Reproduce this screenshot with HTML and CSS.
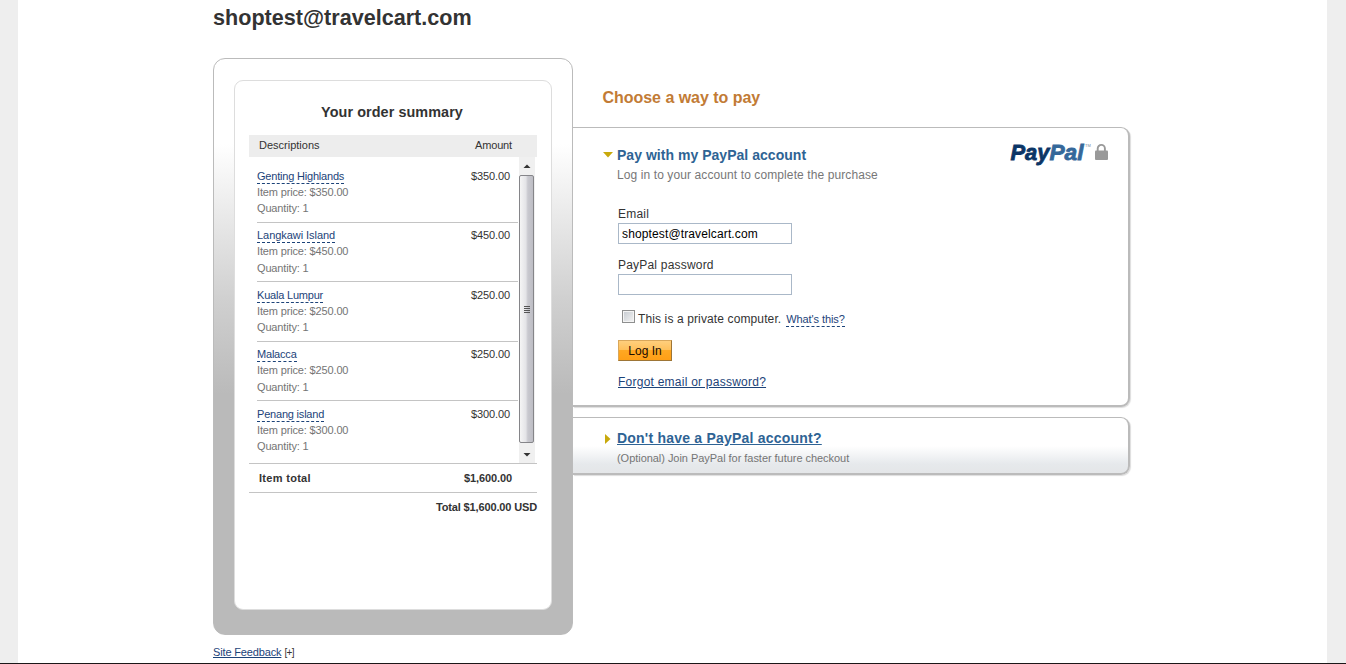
FILE: index.html
```html
<!DOCTYPE html>
<html lang="en">
<head>
<meta charset="utf-8">
<title>Choose a way to pay</title>
<link rel="stylesheet" href="styles.css">
</head>
<body>
<div class="page">
  <h1 class="merchant">shoptest@travelcart.com</h1>
  <div class="columns">
    <section class="summary">
      <div class="summary-card">
        <h2 class="summary-title">Your order summary</h2>
        <div class="summary-head"><span>Descriptions</span><span class="head-amount">Amount</span></div>
        <div class="list">
          <ul class="items">
            <li class="item"><div><a class="tip">Genting Highlands</a><p>Item price: $350.00</p><p>Quantity: 1</p></div><span class="amount">$350.00</span></li>
            <li class="item"><div><a class="tip wide">Langkawi Island</a><p>Item price: $450.00</p><p>Quantity: 1</p></div><span class="amount">$450.00</span></li>
            <li class="item"><div><a class="tip">Kuala Lumpur</a><p>Item price: $250.00</p><p>Quantity: 1</p></div><span class="amount">$250.00</span></li>
            <li class="item"><div><a class="tip">Malacca</a><p>Item price: $250.00</p><p>Quantity: 1</p></div><span class="amount">$250.00</span></li>
            <li class="item"><div><a class="tip">Penang island</a><p>Item price: $300.00</p><p>Quantity: 1</p></div><span class="amount">$300.00</span></li>
          </ul>
          <div class="scrollbar">
            <svg class="arrow" width="15" height="18" viewBox="0 0 15 18"><path d="M4.500 11h7L8 7.500z" fill="#333"/></svg>
            <div class="thumb"><i></i><i></i><i></i><i></i></div>
            <svg class="arrow" width="15" height="20" viewBox="0 0 15 20"><path d="M4.500 10h7L8 13.500z" fill="#333"/></svg>
          </div>
        </div>
        <div class="item-total"><span class="label">Item total</span><span class="sum">$1,600.00</span></div>
        <div class="total">Total $1,600.00 USD</div>
      </div>
    </section>
    <section class="pay">
      <h2 class="pay-title">Choose a way to pay</h2>
      <div class="panel login">
        <svg class="marker" width="10" height="6" viewBox="0 0 10 6"><path d="M0 0h10L5 5.500z" fill="#c8a90c"/></svg>
        <div class="login-body">
          <h3 class="panel-title">Pay with my PayPal account</h3>
          <p class="hint">Log in to your account to complete the purchase</p>
          <label class="field-label" for="email">Email</label>
          <input class="field" id="email" type="text" value="shoptest@travelcart.com">
          <label class="field-label second" for="password">PayPal password</label>
          <input class="field" id="password" type="password">
          <div class="private"><span class="check"></span><span class="private-text">This is a private computer.</span><a class="tip whats">What's this?</a></div>
          <button class="submit" type="button">Log In</button>
          <a class="forgot">Forgot email or password?</a>
        </div>
        <div class="brand">
          <svg width="100" height="32" viewBox="0 -2 100 32">
            <g class="wordmark"><text x="0.500" y="18" textLength="39" lengthAdjust="spacingAndGlyphs" fill="#0b3566" stroke="#0b3566">Pay</text><text x="39.500" y="18" textLength="34" lengthAdjust="spacingAndGlyphs" fill="#35689a" stroke="#35689a">Pal</text></g>
            <text class="tm" x="75" y="5">TM</text>
            <path d="M87.700 10V6.500a3.600 3.600 0 0 1 7.200 0V10" fill="none" stroke="#999" stroke-width="1.900"/>
            <rect x="85" y="8.500" width="13" height="9.500" rx="1" fill="#999"/>
          </svg>
        </div>
      </div>
      <div class="panel signup">
        <svg class="marker side" width="6" height="10" viewBox="0 0 6 10"><path d="M0 0v10l5.500-5z" fill="#c8a90c"/></svg>
        <div>
          <h3 class="panel-title"><a class="join">Don't have a PayPal account?</a></h3>
          <p class="optional">(Optional) Join PayPal for faster future checkout</p>
        </div>
      </div>
    </section>
  </div>
  <footer class="feedback"><a>Site Feedback</a><span>[+]</span></footer>
</div>
</body>
</html>
```
FILE: styles.css
```css
* { box-sizing: border-box; }
html, body { height: 100%; overflow: hidden; }
body { margin: 0; padding: 0 19px 0 18px; background: #eee; color: #333; font-family: "Liberation Sans", Arial, sans-serif; font-size: 11px; border-bottom: 1px solid #1b1718; white-space: nowrap; }
h1, h2, h3, p, ul { margin: 0; padding: 0; }
ul { list-style: none; }
.page { height: 663px; background: #fff; padding-left: 195px; }
.merchant { font-size: 21.6px; line-height: 26px; height: 58px; padding-top: 5px; }
.columns { display: flex; align-items: flex-start; }
.summary { width: 360px; height: 577px; padding: 21px 20px 24px; border: 1px solid #bbb; border-radius: 12px; background: linear-gradient(#fff 85px, #d0d0d0 240px, #bababa 335px); }
.summary-card { height: 530px; padding: 0 14px; border: 1px solid #ddd; border-radius: 9px; background: #fff; }
.summary-title { font-size: 14.4px; letter-spacing: .08px; line-height: 20px; padding: 21px 0 13px; text-align: center; width: 286px; }
.summary-head { display: flex; justify-content: space-between; align-items: center; width: 288px; height: 22px; padding: 0 25px 2px 10px; background: #ededed; }
.head-amount { letter-spacing: -.15px; }
.list { display: flex; width: 288px; height: 306px; padding-left: 8px; }
.items { width: 261px; padding-top: 6.200px; }
.item { display: flex; justify-content: space-between; height: 59.500px; padding: 4.700px 8px 0 0; line-height: 16.100px; border-bottom: 1px solid #c4c4c4; color: #757575; }
.item:last-child { border-bottom: 0; }
.item p { letter-spacing: -.15px; }
.tip { color: #1c4379; border-bottom: 1px dashed #1c4379; padding-bottom: 1px; letter-spacing: -.2px; }
.wide { letter-spacing: -.05px; }
.amount { color: #333; letter-spacing: -.1px; }
.scrollbar { width: 16px; margin-left: 1px; background: #f0f0f0; }
.arrow { display: block; }
.thumb { display: flex; flex-direction: column; align-items: center; justify-content: center; gap: 1px; width: 15px; height: 268px; border: 1px solid #858589; border-radius: 2px; background: linear-gradient(90deg, #f5f5f5, #e4e4e7 45%, #c9c9cf 60%, #bdbdc4); }
.thumb i { width: 6px; height: 1px; background: #555; }
.item-total { display: flex; justify-content: space-between; align-items: center; width: 288px; height: 30px; padding: 0 25px 0 10px; border: solid #c4c4c4; border-width: 1px 0; font-weight: bold; }
.item-total .label { letter-spacing: .3px; }
.sum { letter-spacing: -.1px; }
.total { width: 288px; padding-top: 8px; line-height: 13px; text-align: right; font-weight: bold; letter-spacing: -.14px; }
.pay { width: 557px; }
.pay-title { height: 69px; padding: 30px 0 0 29.500px; font-size: 16px; line-height: 20px; letter-spacing: -.03px; color: #c27b35; }
.panel { display: flex; border: 1px solid #bbb; border-width: 1px 2px 2px 0; border-radius: 0 9px 9px 0; background: #fff; box-shadow: 1px 1px 1px #ddd; }
.login { height: 280px; padding-left: 30px; }
.marker { flex: none; margin: 24px 4px 0 0; }
.login-body { display: flex; flex-direction: column; align-items: flex-start; width: 393px; padding-top: 18px; font-size: 12px; }
.panel-title { font-size: 14px; letter-spacing: .03px; line-height: 18px; color: #2e6394; }
.hint { line-height: 16px; margin-top: 3px; color: #777; letter-spacing: .1px; }
.field-label { margin: 24px 0 2px 1px; line-height: 14px; letter-spacing: .2px; }
.field-label.second { margin-top: 14px; }
.field { width: 174px; height: 21px; margin-left: 1px; padding: 0 3px; border: 1px solid #aab8c8; background: #fff; color: #000; font: 12px "Liberation Sans", Arial, sans-serif; letter-spacing: .13px; }
.private { display: flex; align-items: center; height: 16px; margin: 16px 0 0 5px; }
.private-text { letter-spacing: .12px; }
.check { width: 13px; height: 13px; margin: -5px 3px 0 0; border: 1px solid #8e8f8f; background: linear-gradient(135deg, #c5cad0, #f4f4f4); box-shadow: inset 0 0 0 1px #f4f4f4; }
.whats { margin: 0 0 0 5px; padding-bottom: 0; font-size: 11px; line-height: 14px; letter-spacing: -.1px; }
.submit { width: 54px; height: 21px; margin: 13px 0 0 1px; padding: 0; border: 1px solid; border-color: #d9a75a #9d7536 #9d7536 #d9a75a; background: linear-gradient(#ffcf7d 0, #ffc05a 48%, #ffa822 50%, #ff9f16); font: 12px "Liberation Sans", Arial, sans-serif; color: #1c0c00; }
.forgot { margin: 13px 0 0 1px; line-height: 16px; letter-spacing: .24px; color: #1c4379; text-decoration: underline; }
.brand { margin: 12px 0 0 0; }
.wordmark { font: italic bold 22px "Liberation Sans", Arial, sans-serif; stroke-width: .8; }
.tm { font-size: 4px; fill: #789; }
.signup { height: 58px; margin-top: 10px; padding-left: 32px; background: linear-gradient(#fff 28px, #e6e9ec 46px, #e4e6e8); }
.side { margin: 16px 6px 0 0; }
.signup .panel-title { padding-top: 11px; letter-spacing: .22px; }
.join { text-decoration: underline; }
.optional { margin-top: 4px; line-height: 15px; color: #757575; letter-spacing: -.04px; }
.feedback { display: flex; gap: 3px; align-items: center; padding-top: 10px; line-height: 13px; }
.feedback a { color: #1c4379; text-decoration: underline; letter-spacing: -.15px; }
.feedback span { font-size: 10px; padding-top: 1px; letter-spacing: -.6px; }
```
